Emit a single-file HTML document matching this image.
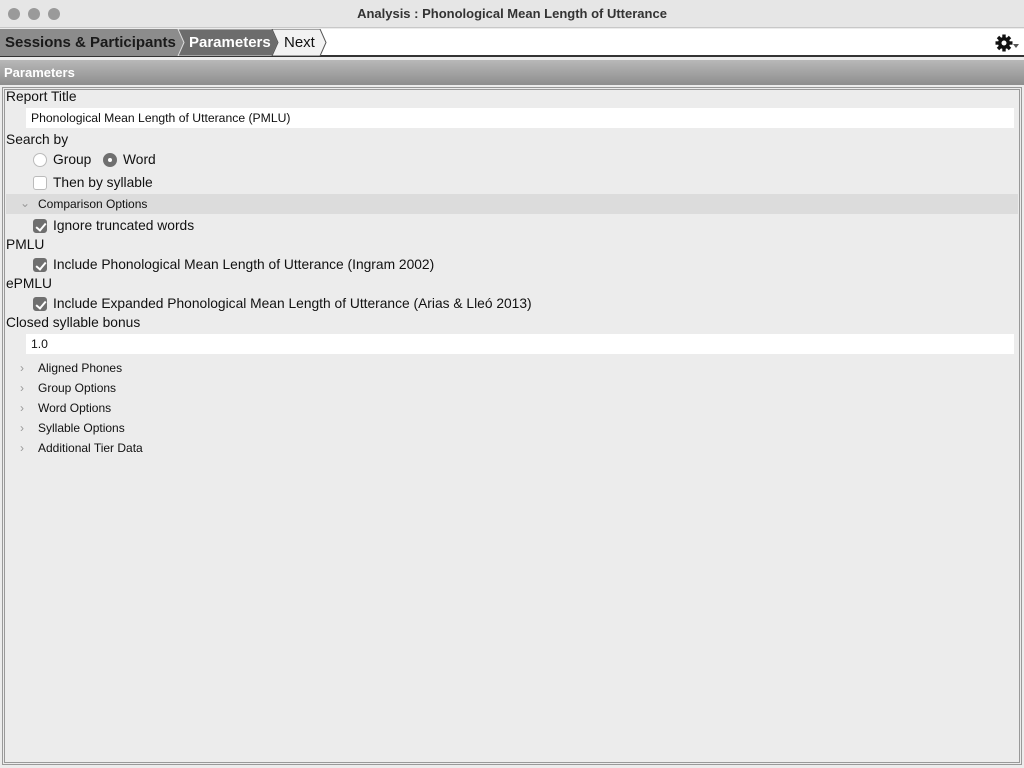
<!DOCTYPE html>
<html><head><style>
*{margin:0;padding:0;box-sizing:border-box}
body{width:1024px;height:768px;background:#ececec;font-family:"Liberation Sans","DejaVu Sans",sans-serif;position:relative;overflow:hidden}
.tb{position:absolute;left:0;top:0;width:1024px;height:28px;background:#e6e6e6;border-bottom:1px solid #c8c8c8}
.dot{position:absolute;top:8px;width:12px;height:12px;border-radius:50%;background:#9a9a9a}
.ttl{position:absolute;top:6px;left:0;width:1024px;text-align:center;font-size:13px;font-weight:bold;color:#333}
.bc{position:absolute;top:29px;left:0;width:1024px;height:28px;background:#fff;border-bottom:2px solid #333}
.t{position:absolute;top:0;height:27px;font-size:15px;font-weight:bold;line-height:27px}
.ph{position:absolute;top:60px;left:0;width:1024px;height:25px;background:linear-gradient(#b8b8b8,#8e8e8e);color:#fff;font-weight:bold;font-size:13px;line-height:25px;padding-left:4px}
.cont{position:absolute;top:87px;left:2px;width:1020px;height:678px;border:3px double #999;background:#ececec}
.a{position:absolute;font-size:13.8px;color:#111}
.f{position:absolute;left:26px;width:988px;height:20px;background:#fff;font-size:12.2px;line-height:20px;padding-left:5px;color:#111}
.cb{position:absolute;width:14px;height:14px;border-radius:3px;background:#fff;border:1px solid #bbb}
.cb.on{background:#6f6f6f;border-color:#6f6f6f}
.cb.on:after{content:"";position:absolute;left:4px;top:1px;width:4px;height:8px;border:solid #fff;border-width:0 2px 2px 0;transform:rotate(40deg)}
.rd{position:absolute;width:14px;height:14px;border-radius:50%;background:#fff;border:1px solid #bbb}
.rd.on{background:#6f6f6f;border-color:#6f6f6f}
.rd.on:after{content:"";position:absolute;left:4px;top:4px;width:4px;height:4px;border-radius:50%;background:#fff}
.s{position:absolute;font-size:12px;color:#111;left:38px}
.ch{position:absolute;left:20px;font-size:12px;color:#999}
</style></head><body>
<div class="tb"><div class="dot" style="left:8px"></div><div class="dot" style="left:28px"></div><div class="dot" style="left:48px"></div><div class="ttl">Analysis : Phonological Mean Length of Utterance</div></div>
<div class="bc">
<svg style="position:absolute;left:0;top:0" width="330" height="27"><polygon points="0,0 178,0 184,13.5 178,27 0,27" fill="#8c8c8c"/><polygon points="178,0 272,0 278,13.5 272,27 178,27 184,13.5" fill="#6c6c6c" stroke="#ddd" stroke-width="1"/><polygon points="272,0 320,0 326,13.5 320,27 272,27 278,13.5" fill="#f2f2f2" stroke="#555" stroke-width="1"/></svg>
<div class="t" style="left:5px;color:#1a1a1a">Sessions &amp; Participants</div>
<div class="t" style="left:189px;color:#fff">Parameters</div>
<div class="t" style="left:284px;color:#111;font-weight:normal">Next</div>
<svg style="position:absolute;left:995px;top:5px" width="18" height="18" viewBox="0 0 18 18"><g fill="#111"><circle cx="9" cy="9" r="6"/><rect x="7.3" y="0.5" width="3.4" height="17"/><rect x="0.5" y="7.3" width="17" height="3.4"/><rect x="7.3" y="0.5" width="3.4" height="17" transform="rotate(45 9 9)"/><rect x="7.3" y="0.5" width="3.4" height="17" transform="rotate(-45 9 9)"/></g><circle cx="9" cy="9" r="2.5" fill="#fff"/></svg>
<svg style="position:absolute;left:1013px;top:15px" width="6" height="4"><polygon points="0,0 6,0 3,4" fill="#555"/></svg>
</div>
<div class="ph">Parameters</div>
<div class="cont"></div>
<div class="a" style="left:6px;top:89px">Report Title</div>
<div class="f" style="top:108px">Phonological Mean Length of Utterance (PMLU)</div>
<div class="a" style="left:6px;top:132px">Search by</div>
<div class="rd" style="left:33px;top:153px"></div><div class="a" style="left:53px;top:152px">Group</div>
<div class="rd on" style="left:103px;top:153px"></div><div class="a" style="left:123px;top:152px">Word</div>
<div class="cb" style="left:33px;top:176px"></div><div class="a" style="left:53px;top:175px">Then by syllable</div>
<div style="position:absolute;left:6px;top:194px;width:1012px;height:20px;background:#dcdcdc"></div>
<div class="ch" style="top:196px">⌄</div><div class="s" style="top:197px">Comparison Options</div>
<div class="cb on" style="left:33px;top:219px"></div><div class="a" style="left:53px;top:218px">Ignore truncated words</div>
<div class="a" style="left:6px;top:237px">PMLU</div>
<div class="cb on" style="left:33px;top:258px"></div><div class="a" style="left:53px;top:257px">Include Phonological Mean Length of Utterance (Ingram 2002)</div>
<div class="a" style="left:6px;top:276px">ePMLU</div>
<div class="cb on" style="left:33px;top:297px"></div><div class="a" style="left:53px;top:296px">Include Expanded Phonological Mean Length of Utterance (Arias &amp; Lleó 2013)</div>
<div class="a" style="left:6px;top:315px">Closed syllable bonus</div>
<div class="f" style="top:334px">1.0</div>
<div class="ch" style="top:361px">›</div><div class="s" style="top:361px">Aligned Phones</div>
<div class="ch" style="top:381px">›</div><div class="s" style="top:381px">Group Options</div>
<div class="ch" style="top:401px">›</div><div class="s" style="top:401px">Word Options</div>
<div class="ch" style="top:421px">›</div><div class="s" style="top:421px">Syllable Options</div>
<div class="ch" style="top:441px">›</div><div class="s" style="top:441px">Additional Tier Data</div>
</body></html>
